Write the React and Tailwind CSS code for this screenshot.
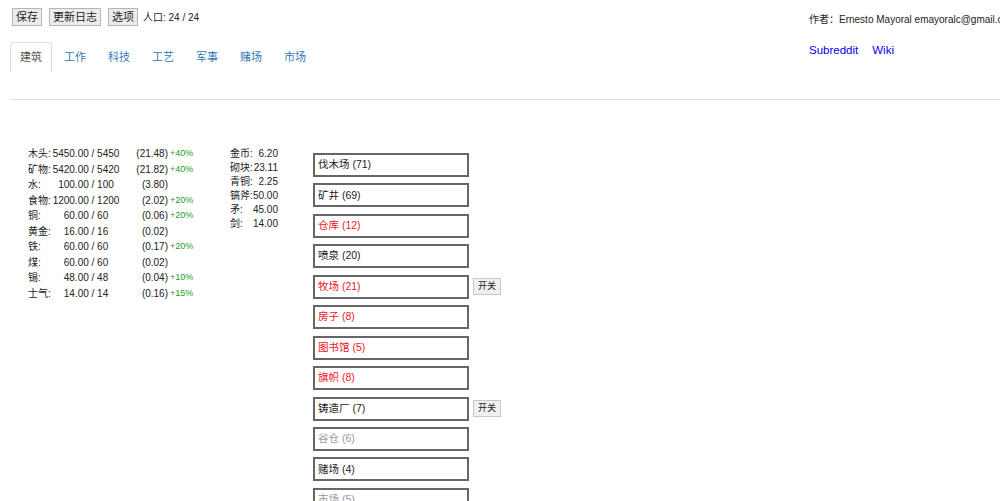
import React from 'react'

const resources = [
  ['木头:', '5450.00 / 5450', '(21.48)', '+40%'],
  ['矿物:', '5420.00 / 5420', '(21.82)', '+40%'],
  ['水:', '100.00 / 100', '(3.80)', ''],
  ['食物:', '1200.00 / 1200', '(2.02)', '+20%'],
  ['铜:', '60.00 / 60', '(0.06)', '+20%'],
  ['黄金:', '16.00 / 16', '(0.02)', ''],
  ['铁:', '60.00 / 60', '(0.17)', '+20%'],
  ['煤:', '60.00 / 60', '(0.02)', ''],
  ['锡:', '48.00 / 48', '(0.04)', '+10%'],
  ['士气:', '14.00 / 14', '(0.16)', '+15%'],
]

const goods = [
  ['金币:', '6.20'],
  ['砌块:', '23.11'],
  ['青铜:', '2.25'],
  ['镐斧:', '50.00'],
  ['矛:', '45.00'],
  ['剑:', '14.00'],
]

// tone: normal | red | gray
const buildings = [
  { name: '伐木场 (71)', tone: 'normal' },
  { name: '矿井 (69)', tone: 'normal' },
  { name: '仓库 (12)', tone: 'red' },
  { name: '喷泉 (20)', tone: 'normal' },
  { name: '牧场 (21)', tone: 'red', toggle: true },
  { name: '房子 (8)', tone: 'red' },
  { name: '图书馆 (5)', tone: 'red' },
  { name: '旗帜 (8)', tone: 'red' },
  { name: '铸造厂 (7)', tone: 'normal', toggle: true },
  { name: '谷仓 (6)', tone: 'gray' },
  { name: '赌场 (4)', tone: 'normal' },
  { name: '市场 (5)', tone: 'gray' },
]

const tabs = ['建筑', '工作', '科技', '工艺', '军事', '赌场', '市场']

const toneClass = {
  normal: 'text-[#222]',
  red: 'text-[#f0141e]',
  gray: 'text-[#999]',
}

function TopButton({ children }) {
  return (
    <button className="h-[18px] px-[3px] border border-[#b5b5b5] bg-[#ececec] text-[11px] leading-none text-[#222]">
      {children}
    </button>
  )
}

export default function App() {
  return (
    <div className="w-[1000px] h-[501px] overflow-hidden bg-white text-[#222] font-['Liberation_Sans','Noto_Sans_CJK_SC',sans-serif]">
      <div className="flex justify-between">
        <div className="flex flex-col">
          <div className="flex items-center gap-[7px] pl-[12px] pt-[8px]">
            <TopButton>保存</TopButton>
            <TopButton>更新日志</TopButton>
            <TopButton>选项</TopButton>
            <span className="text-[10px] -ml-[2px]">人口: 24 / 24</span>
          </div>
          <div className="flex pl-[10px] mt-[16px]">
            {tabs.map((t, i) => (
              <div
                key={t}
                className={
                  'h-[30px] px-[9px] mr-[2px] flex items-center text-[11px] rounded-t-[4px] border border-b-0 ' +
                  (i === 0 ? 'border-[#ddd] text-[#555]' : 'border-transparent text-[#337ab7]')
                }
              >
                {t}
              </div>
            ))}
          </div>
        </div>
        <div className="w-[191px] pt-[14px] whitespace-nowrap overflow-hidden">
          <div className="text-[10px] leading-[12px]">作者：Ernesto Mayoral emayoralc@gmail.com</div>
          <div className="flex gap-[14px] mt-[16px] text-[11.5px] text-[#0000ee]">
            <span>Subreddit</span>
            <span>Wiki</span>
          </div>
        </div>
      </div>

      <div className="ml-[10px] mt-[27px] border-t border-[#ddd]"></div>

      <div className="flex pl-[28px] pt-[46px] text-[10px]">
        <div className="flex flex-col w-[202px]">
          {resources.map(([label, value, rate, bonus]) => (
            <div key={label} className="flex items-center h-[15.5px] whitespace-nowrap">
              <span className="w-[24px]">{label}</span>
              <span className="w-[68px] flex justify-center">{value}</span>
              <span className="w-[48px] text-right">{rate}</span>
              <span className="ml-[2px] text-[9px] text-[#1f9a1f]">{bonus}</span>
            </div>
          ))}
        </div>

        <div className="flex flex-col w-[83px]">
          {goods.map(([label, value]) => (
            <div key={label} className="flex justify-between w-[48px] h-[14px] items-center whitespace-nowrap">
              <span>{label}</span>
              <span>{value}</span>
            </div>
          ))}
        </div>

        <div className="flex flex-col pt-[7px]">
          {buildings.map((b) => (
            <div key={b.name} className="flex items-center mb-[6.45px]">
              <div
                className={
                  'w-[156px] h-[24px] border-2 border-[#666] pl-[3px] flex items-center text-[10.5px] ' +
                  toneClass[b.tone]
                }
              >
                {b.name}
              </div>
              {b.toggle && (
                <button className="ml-[4px] w-[28px] h-[17px] border border-[#c8c8c8] bg-[#f0f0f0] text-[9px] leading-none text-[#222]">
                  开关
                </button>
              )}
            </div>
          ))}
        </div>
      </div>
    </div>
  )
}
